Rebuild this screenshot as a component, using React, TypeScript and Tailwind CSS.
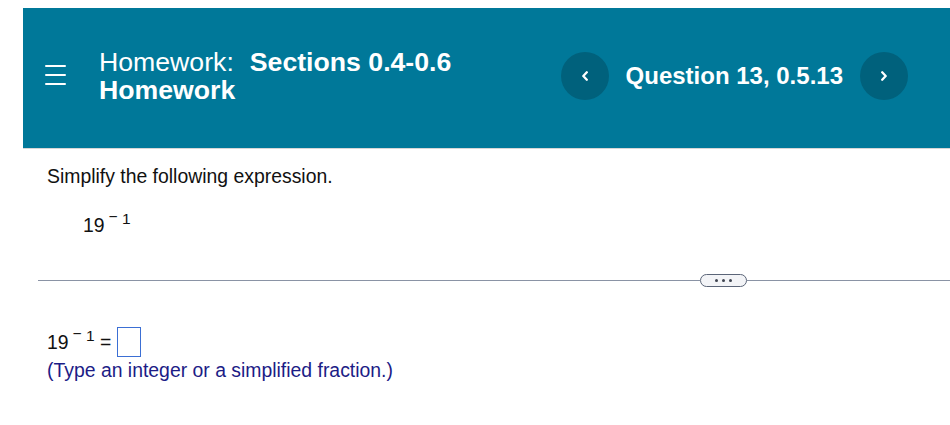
import React from "react";

function Chevron({ dir }: { dir: "left" | "right" }) {
  return (
    <svg width="8" height="10" viewBox="0 0 8 10" fill="none">
      {dir === "left" ? (
        <polyline points="5.8,1.3 2.3,5 5.8,8.7" stroke="#ffffff" strokeWidth="2.3" strokeLinecap="round" strokeLinejoin="round" />
      ) : (
        <polyline points="2.2,1.3 5.7,5 2.2,8.7" stroke="#ffffff" strokeWidth="2.3" strokeLinecap="round" strokeLinejoin="round" />
      )}
    </svg>
  );
}

function Power() {
  return (
    <>
      <span>19</span>
      <span className="relative top-[-8px] ml-[4px] text-[15.5px] leading-none">
        <span className="relative top-[-2px]">−</span> 1
      </span>
    </>
  );
}

export default function App() {
  return (
    <div className="w-[950px] h-[425px] overflow-hidden bg-white font-['Liberation_Sans',Arial,sans-serif]">
      <div className="pt-[8px] pl-[23px]">
        <header className="h-[141px] bg-[#007899] border-b border-[#d6d6d6] flex items-center pb-[4px] text-white">
          <div className="ml-[22px] mb-[3px] flex flex-col gap-[7px] w-[21px]">
            <div className="h-[2px] bg-white rounded-full" />
            <div className="h-[2px] bg-white rounded-full" />
            <div className="h-[2px] bg-white rounded-full" />
          </div>
          <div className="ml-[33px] w-[370px] text-[26.67px] leading-[28px]">
            <div className="flex gap-[16px]">
              <span>Homework:</span>
              <span className="font-bold">Sections 0.4-0.6</span>
            </div>
            <div className="font-bold">Homework</div>
          </div>
          <div className="flex-1" />
          <div className="flex items-center mr-[42px]">
            <button className="w-[48px] h-[48px] rounded-full bg-[#00617c] flex items-center justify-center">
              <Chevron dir="left" />
            </button>
            <div className="mx-[17px] text-[24px] font-bold leading-[28px]">Question 13, 0.5.13</div>
            <button className="w-[48px] h-[48px] rounded-full bg-[#00617c] flex items-center justify-center">
              <Chevron dir="right" />
            </button>
          </div>
        </header>
      </div>

      <div className="text-[19.4px] leading-[22px] text-[#111111]">
        <div className="pl-[47px] mt-[16px]">Simplify the following expression.</div>
        <div className="pl-[83px] mt-[27px]">
          <Power />
        </div>

        <div className="ml-[38px] mt-[38px] h-[13px] flex items-center">
          <div className="w-[662px] h-px bg-[#8a93a5]" />
          <div className="w-[47px] h-[13px] rounded-full border border-[#5b6578] bg-[#f3f4f7] flex items-center justify-center gap-[4px]">
            <div className="w-[3px] h-[3px] rounded-full bg-[#3f4450]" />
            <div className="w-[3px] h-[3px] rounded-full bg-[#3f4450]" />
            <div className="w-[3px] h-[3px] rounded-full bg-[#3f4450]" />
          </div>
          <div className="flex-1 h-px bg-[#8a93a5]" />
        </div>

        <div className="pl-[47px] mt-[40px]">
          <Power /> <span>=</span>
          <span className="inline-block ml-[6px] w-[24px] h-[30px] border border-[#3b6fd4] align-[-8px]" />
        </div>
        <div className="pl-[47px] mt-[2px] text-[#1c1c86]">(Type an integer or a simplified fraction.)</div>
      </div>
    </div>
  );
}
